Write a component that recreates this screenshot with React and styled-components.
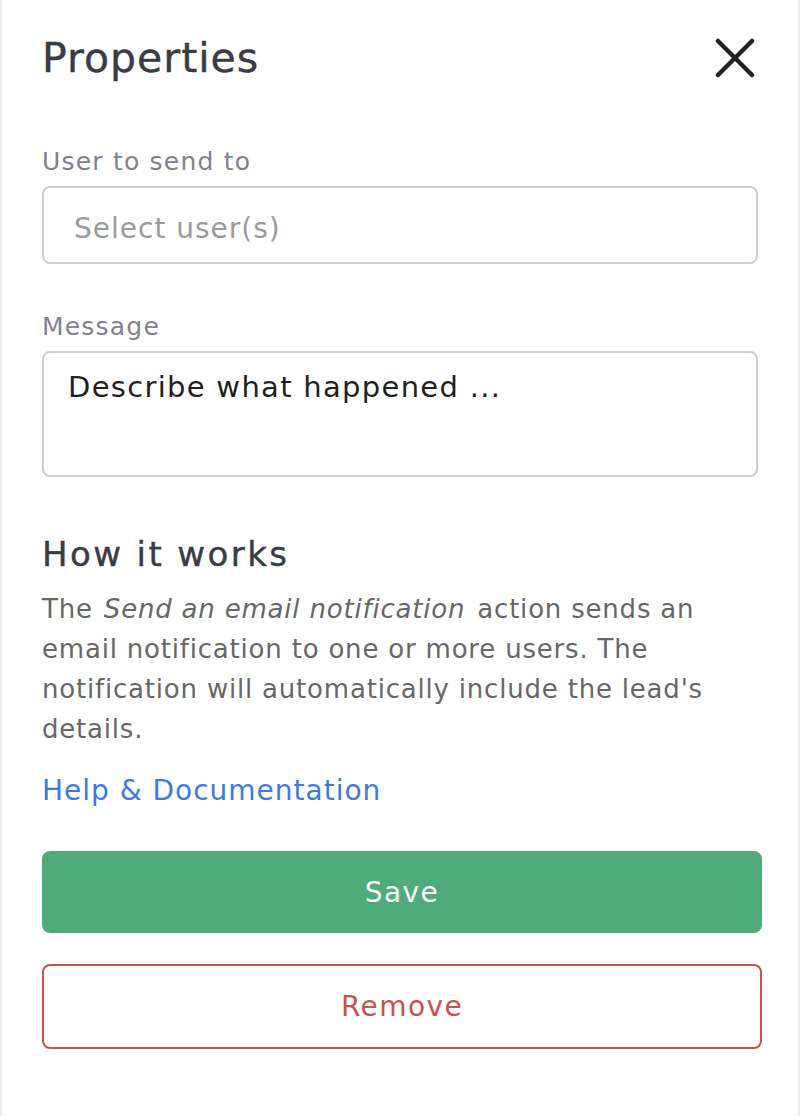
import React from 'react';
import styled, { createGlobalStyle } from 'styled-components';

const Global = createGlobalStyle`
  html, body {
    margin: 0;
    padding: 0;
    background: #ffffff;
  }
  body {
    font-family: "DejaVu Sans", "Open Sans", sans-serif;
  }
`;

const Panel = styled.div`
  box-sizing: border-box;
  width: 800px;
  min-height: 1116px;
  background: #fff;
  border-left: 2px solid #ebebf2;
  border-right: 2px solid #ebebf2;
  padding: 34px 38px 0 40px;
  display: flex;
  flex-direction: column;
`;

const Header = styled.div`
  display: flex;
  align-items: center;
  justify-content: space-between;
  height: 48px;
  padding-right: 5px;
`;

const Title = styled.h1`
  margin: 0;
  font-size: 41px;
  line-height: 48px;
  font-weight: 500;
  letter-spacing: 1px;
  color: #393c44;
  -webkit-text-stroke: 0.4px #393c44;
`;

const CloseButton = styled.button`
  border: 0;
  background: none;
  padding: 0;
  width: 40px;
  height: 40px;
  display: flex;
  align-items: center;
  justify-content: center;
  cursor: pointer;
`;

const Label = styled.label`
  display: block;
  font-size: 25px;
  line-height: 32px;
  letter-spacing: 1.2px;
  color: #828190;
  margin-top: ${(p) => p.$top}px;
  margin-bottom: 8px;
`;

const Field = styled.div`
  box-sizing: border-box;
  width: 716px;
  height: ${(p) => p.$h}px;
  border: 2px solid #cfcfcf;
  border-radius: 8px;
  padding: ${(p) => p.$pad};
  font-size: ${(p) => (p.$muted ? 28 : 29)}px;
  letter-spacing: ${(p) => (p.$muted ? 1 : 1.3)}px;
  line-height: 40px;
  color: ${(p) => (p.$muted ? '#9b9b9b' : '#1f1f1f')};
  display: flex;
  align-items: ${(p) => (p.$muted ? 'center' : 'flex-start')};
`;

const Heading = styled.h2`
  margin: 55px 0 13px;
  font-size: 34px;
  line-height: 44px;
  font-weight: 500;
  letter-spacing: 2.4px;
  color: #393c44;
  -webkit-text-stroke: 0.4px #393c44;
`;

const Para = styled.p`
  margin: 0;
  font-size: 26px;
  line-height: 40px;
  letter-spacing: 0.8px;
  color: #676767;
  em {
    display: inline-block;
    font-style: italic;
    margin: 0 3px 0 2px;
  }
`;

const Link = styled.a`
  display: block;
  margin-top: 22px;
  font-size: 28px;
  line-height: 40px;
  letter-spacing: 1px;
  color: #3c7be3;
  text-decoration: none;
`;

const Button = styled.button`
  box-sizing: border-box;
  width: 720px;
  height: ${(p) => (p.$danger ? 85 : 82)}px;
  margin-top: ${(p) => p.$top}px;
  border-radius: 8px;
  border: 2px solid ${(p) => (p.$danger ? '#c8524e' : '#4fab79')};
  background: ${(p) => (p.$danger ? '#fff' : '#4fab79')};
  color: ${(p) => (p.$danger ? '#c8524e' : '#fff')};
  font-family: inherit;
  font-size: 28px;
  letter-spacing: 1.4px;
  cursor: pointer;
`;

function CloseIcon() {
  return (
    <svg width="40" height="40" viewBox="0 0 40 40">
      <path
        d="M3 3 L37 37 M37 3 L3 37"
        stroke="#222"
        strokeWidth="4.5"
        strokeLinecap="round"
        fill="none"
      />
    </svg>
  );
}

export default function App() {
  return (
    <>
      <Global />
      <Panel>
        <Header>
          <Title>Properties</Title>
          <CloseButton aria-label="Close">
            <CloseIcon />
          </CloseButton>
        </Header>

        <Label $top={64}>User to send to</Label>
        <Field $h={78} $pad="8px 30px 0" $muted>Select user(s)</Field>

        <Label $top={47}>Message</Label>
        <Field $h={126} $pad="14px 24px">Describe what happened ...</Field>

        <Heading>How it works</Heading>
        <Para>
          The <em>Send an email notification</em> action sends an email
          notification to one or more users. The notification will
          automatically include the lead's details.
        </Para>
        <Link href="#">Help &amp; Documentation</Link>

        <Button $top={40}>Save</Button>
        <Button $top={31} $danger>Remove</Button>
      </Panel>
    </>
  );
}
